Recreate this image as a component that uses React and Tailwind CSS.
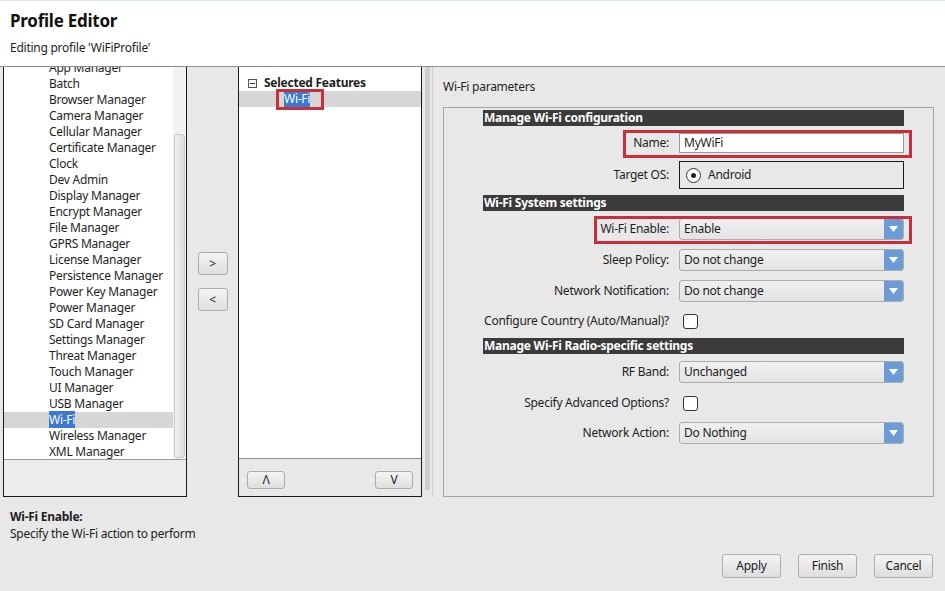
import React from "react";

const features = [
  "App Manager",
  "Batch",
  "Browser Manager",
  "Camera Manager",
  "Cellular Manager",
  "Certificate Manager",
  "Clock",
  "Dev Admin",
  "Display Manager",
  "Encrypt Manager",
  "File Manager",
  "GPRS Manager",
  "License Manager",
  "Persistence Manager",
  "Power Key Manager",
  "Power Manager",
  "SD Card Manager",
  "Settings Manager",
  "Threat Manager",
  "Touch Manager",
  "UI Manager",
  "USB Manager",
  "Wi-Fi",
  "Wireless Manager",
  "XML Manager",
];

const Btn = ({ children, className = "" }) => (
  <button
    className={`flex items-center justify-center border border-[#acacac] rounded-[3px] bg-gradient-to-b from-[#f4f4f4] to-[#dedede] text-[12px] text-[#1a1a1a] ${className}`}
  >
    {children}
  </button>
);

const SectionBar = ({ children, className = "" }) => (
  <div
    className={`h-[16px] bg-[#3b3b3b] text-white font-bold text-[12px] leading-[16px] pl-[1px] ${className}`}
  >
    {children}
  </div>
);

const Row = ({ label, children, className = "", h = "h-[22px]" }) => (
  <div className={`relative flex items-center ${h} ${className}`}>
    <div className="w-[186px] text-right text-[12px] text-[#1e1e1e] whitespace-nowrap">
      {label}
    </div>
    <div className="ml-[10px] w-[225px] h-full flex items-center">{children}</div>
  </div>
);

const Select = ({ value }) => (
  <div className="w-full h-full flex border border-[#adadad] rounded-[3px] bg-gradient-to-b from-[#f0f0f0] to-[#e3e3e3] overflow-hidden">
    <div className="flex-1 pl-[4px] text-[12px] leading-[20px] text-[#1e1e1e]">{value}</div>
    <div className="w-[19px] bg-[#6d9bd6] flex items-center justify-center">
      <svg width="9" height="6" viewBox="0 0 9 6">
        <path d="M0 0 L9 0 L4.5 6 Z" fill="#ffffff" />
      </svg>
    </div>
  </div>
);

const Check = () => (
  <div className="ml-[4px] w-[15px] h-[15px] bg-white border border-[#333] rounded-[3px]" />
);

const RedBox = ({ className }) => (
  <div className={`absolute border-[3px] border-[#c7303a] pointer-events-none ${className}`} />
);

export default function App() {
  return (
    <div
      className="w-[945px] h-[591px] bg-[#e8e8e8] overflow-hidden text-[#1e1e1e] tracking-[-0.25px]"
      style={{ fontFamily: '"Noto Sans", "Open Sans", sans-serif' }}
    >
      {/* Header */}
      <div className="h-[67px] bg-white border-t border-[#d6e3ec] border-b border-b-[#8c8c8c] pl-[10px]">
        <div className="pt-[8px] text-[17px] font-bold leading-[24px] text-[#111]">Profile Editor</div>
        <div className="mt-[7px] text-[12px] leading-[16px]">Editing profile 'WiFiProfile'</div>
      </div>

      {/* Main area */}
      <div className="flex h-[430px]">
        {/* Feature list */}
        <div className="ml-[3px] w-[184px] h-full border border-[#1a1a1a] border-t-0 flex flex-col bg-[#ececec]">
          <div className="h-[393px] flex bg-white border-b border-[#9a9a9a] overflow-hidden">
            <div className="flex-1 overflow-hidden">
              <div className="-mt-[7px]">
                {features.map((f) => (
                  <div
                    key={f}
                    className={`h-[16px] pl-[45px] text-[12px] leading-[16px] ${
                      f === "Wi-Fi" ? "bg-[#d6d6d6]" : ""
                    }`}
                  >
                    <span className={f === "Wi-Fi" ? "bg-[#3b78d2] text-white" : ""}>{f}</span>
                  </div>
                ))}
              </div>
            </div>
            <div className="w-[13px] bg-[#f2f2f2] flex flex-col pt-[67px] pb-[1px] px-[1px]">
              <div className="flex-1 rounded-[3px] border border-[#c9c9c9] bg-gradient-to-r from-[#f0f0f0] to-[#dcdcdc]" />
            </div>
          </div>
        </div>

        {/* Add / remove buttons */}
        <div className="w-[51px] flex flex-col items-center pt-[185px] gap-[13px]">
          <Btn className="w-[30px] h-[23px]">&gt;</Btn>
          <Btn className="w-[30px] h-[23px]">&lt;</Btn>
        </div>

        {/* Selected features */}
        <div className="w-[184px] h-full border border-[#1a1a1a] border-t-0 flex flex-col">
          <div className="h-[392px] bg-white border-b border-[#8c8c8c] pt-[8px]">
            <div className="flex items-center h-[16px] pl-[9px]">
              <div className="w-[9px] h-[9px] border border-[#555] flex items-center justify-center">
                <div className="w-[5px] h-[1px] bg-[#333]" />
              </div>
              <span className="ml-[7px] text-[12px] font-bold">Selected Features</span>
            </div>
            <div className="relative h-[16px] bg-[#d6d6d6] pl-[45px] text-[12px] leading-[16px]">
              <span className="bg-[#3b78d2] text-white">Wi-Fi</span>
              <RedBox className="left-[37px] top-[-2px] w-[48px] h-[21px]" />
            </div>
          </div>
          <div className="flex justify-between items-center px-[8px] pt-[12px]">
            <Btn className="w-[38px] h-[18px] text-[10px]">&#923;</Btn>
            <Btn className="w-[38px] h-[18px] text-[10px]">V</Btn>
          </div>
        </div>

        {/* Splitter */}
        <div className="w-[10px] h-[423px] flex justify-center">
          <div className="w-[5px] h-full ml-[1px] bg-[#eeeeee] bg-[radial-gradient(#a8a8a8_0.6px,transparent_0.8px)] bg-[length:2px_2px]" />
        </div>

        {/* Parameters */}
        <div className="flex-1 h-full border-l border-[#cfcfcf] pl-[10px]">
          <div className="pt-[12px] text-[12px] leading-[16px]">Wi-Fi parameters</div>
          <div className="mt-[12px] w-[491px] h-[390px] border border-[#a3a3a3] pl-[39px] pt-[2px]">
            <SectionBar className="w-[421px]">Manage Wi-Fi configuration</SectionBar>

            <Row label="Name:" className="mt-[7px]" h="h-[20px]">
              <div className="w-full h-full bg-white border border-[#9a9a9a] pl-[4px] text-[12px] leading-[18px]">
                MyWiFi
              </div>
              <RedBox className="left-[140px] top-[-3px] w-[289px] h-[28px]" />
            </Row>

            <Row label="Target OS:" className="mt-[8px]" h="h-[28px]">
              <div className="w-full h-full border border-[#1a1a1a] flex items-center pl-[6px]">
                <div className="w-[15px] h-[15px] rounded-full border border-[#333] bg-white flex items-center justify-center">
                  <div className="w-[5px] h-[5px] rounded-full bg-[#222]" />
                </div>
                <span className="ml-[7px] text-[12px]">Android</span>
              </div>
            </Row>

            <SectionBar className="w-[421px] mt-[6px]">Wi-Fi System settings</SectionBar>

            <Row label="Wi-Fi Enable:" className="mt-[7px]">
              <Select value="Enable" />
              <RedBox className="left-[111px] top-[-2px] w-[318px] h-[28px]" />
            </Row>
            <Row label="Sleep Policy:" className="mt-[9px]">
              <Select value="Do not change" />
            </Row>
            <Row label="Network Notification:" className="mt-[9px]">
              <Select value="Do not change" />
            </Row>
            <Row label="Configure Country (Auto/Manual)?" className="mt-[8px]">
              <Check />
            </Row>

            <SectionBar className="w-[421px] mt-[6px]">Manage Wi-Fi Radio-specific settings</SectionBar>

            <Row label="RF Band:" className="mt-[7px]">
              <Select value="Unchanged" />
            </Row>
            <Row label="Specify Advanced Options?" className="mt-[9px]">
              <Check />
            </Row>
            <Row label="Network Action:" className="mt-[8px]">
              <Select value="Do Nothing" />
            </Row>
          </div>
        </div>
      </div>

      {/* Footer */}
      <div className="pl-[10px] pt-[12px]">
        <div className="text-[12px] font-bold leading-[16px]">Wi-Fi Enable:</div>
        <div className="text-[12px] leading-[17px]">Specify the Wi-Fi action to perform</div>
      </div>
      <div className="flex justify-end gap-[17px] pr-[12px] mt-[12px]">
        <Btn className="w-[59px] h-[24px]">Apply</Btn>
        <Btn className="w-[59px] h-[24px]">Finish</Btn>
        <Btn className="w-[59px] h-[24px]">Cancel</Btn>
      </div>
    </div>
  );
}
